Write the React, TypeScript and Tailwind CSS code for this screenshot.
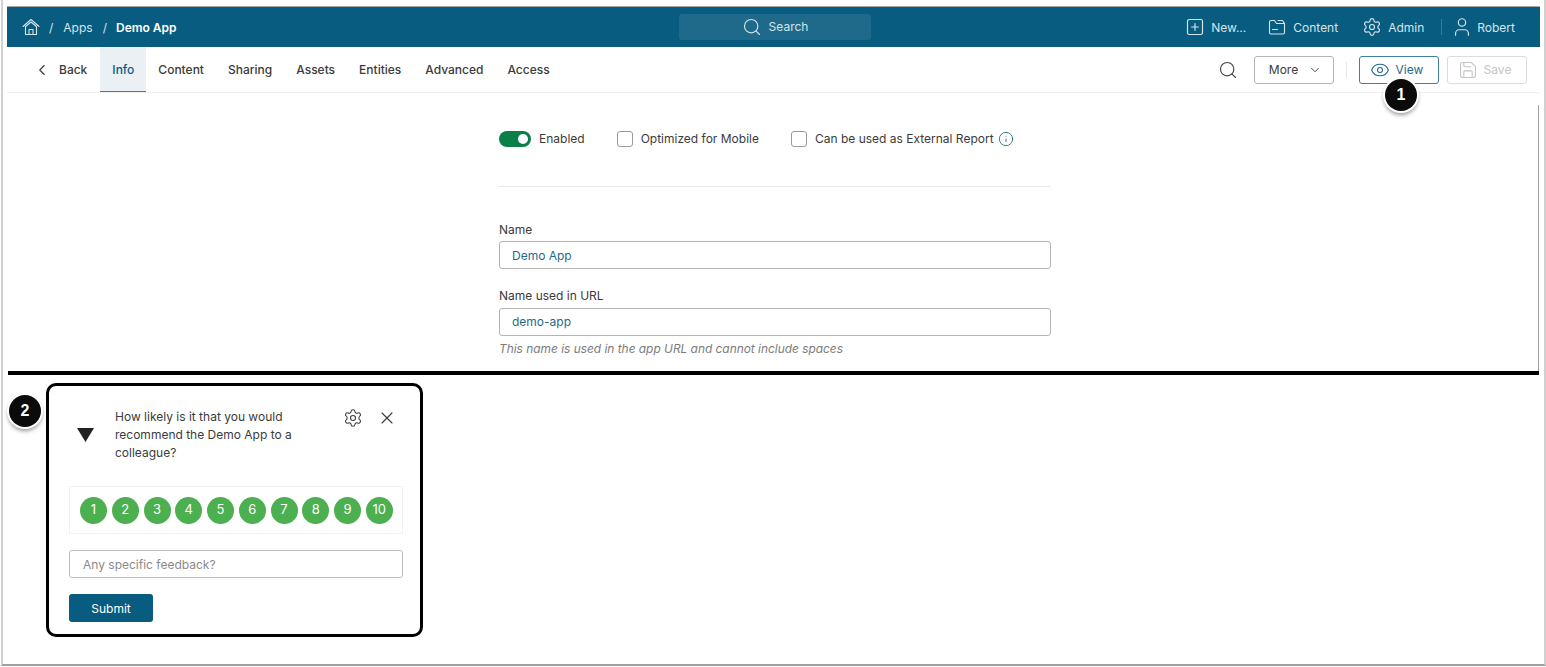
import React from 'react';
import { ChevronDown, ChevronLeft, Eye, Info, Save, Search, Settings, SquarePlus, User, X } from 'lucide-react';

const tabs = ['Info', 'Content', 'Sharing', 'Assets', 'Entities', 'Advanced', 'Access'];
const scores = [1, 2, 3, 4, 5, 6, 7, 8, 9, 10];

const HomeIcon: React.FC = () => (
  <svg width="18" height="18" viewBox="0 0 18 18" fill="none" stroke="currentColor" strokeWidth="1.1" strokeLinecap="round" strokeLinejoin="round">
    <path d="M1 8.5 9 1.5l8 7" />
    <path d="M3.5 8.5 9 4l5.5 4.5" />
    <path d="M3.5 8.5v8h11v-8" />
    <path d="M7 16.5v-5h4v5" />
  </svg>
);

const FolderIcon: React.FC = () => (
  <svg width="18" height="18" viewBox="0 0 18 18" fill="none" stroke="currentColor" strokeWidth="1.1" strokeLinecap="round" strokeLinejoin="round">
    <path d="M1.5 4.5V14.5a1.5 1.5 0 0 0 1.5 1.5h12a1.5 1.5 0 0 0 1.5-1.5V5.5H8.5L6.5 2.5H3A1.5 1.5 0 0 0 1.5 4V4.5" />
    <path d="M10 2.5h4.5l2 3" />
    <path d="M4.5 11.5h5" />
  </svg>
);

const Badge: React.FC<{ n: number; className: string }> = ({ n, className }) => (
  <div className={`absolute z-10 flex h-[32px] w-[32px] items-center justify-center rounded-full bg-[#0b0b0b] font-['Liberation_Sans',sans-serif] text-[16px] font-bold text-white shadow-[0_3px_4px_1px_rgba(0,0,0,0.4)] ring-2 ring-white ${className}`}>
    {n}
  </div>
);

const HeaderLink: React.FC<{ icon: React.ReactNode; text: string; gap: string; className?: string }> = ({ icon, text, gap, className }) => (
  <div className={`flex items-center ${gap} ${className || ''}`}>
    {icon}
    <span className="pt-[1px]">{text}</span>
  </div>
);

export default function App() {
  return (
    <div className="h-[667px] w-[1546px] overflow-hidden bg-white pl-[1px] pb-[1px] font-['Inter',sans-serif] text-[12px] text-[#3b3b3b]">
      <div className="relative flex h-full flex-col border-r-2 border-b-2 border-l-2 border-r-[#d0d0d0] border-b-[#a0a0a0] border-l-[#d0d0d0] pt-[6px] pr-[4px] pl-[4px]">
        <div className="h-px shrink-0 bg-[#a8a8a8]" />
        <header className="flex h-[40px] shrink-0 items-center bg-[#085c80] pl-[15px] pr-[25px] text-[#d5e4ea]">
          <div className="flex w-[657px] items-center">
            <HomeIcon />
            <span className="ml-[9px] pt-[1px]">/</span>
            <span className="ml-[10px] pt-[1px]">Apps</span>
            <span className="ml-[10px] pt-[1px]">/</span>
            <span className="ml-[9px] pt-[1px] font-semibold text-white">Demo App</span>
          </div>
          <div className="flex h-[26px] w-[192px] items-center justify-center gap-[7px] rounded-[3px] bg-[#1f6a8a]">
            <Search size={20} strokeWidth={1.4} />
            <span>Search</span>
          </div>
          <div className="ml-auto flex items-center">
            <HeaderLink icon={<SquarePlus size={20} strokeWidth={1.4} />} text="New..." gap="gap-[6px]" />
            <HeaderLink icon={<FolderIcon />} text="Content" gap="gap-[7px]" className="ml-[22px]" />
            <HeaderLink icon={<Settings size={20} strokeWidth={1.4} />} text="Admin" gap="gap-[6px]" className="ml-[24px]" />
            <div className="ml-[17px] h-[16px] w-px bg-[#3a7c98]" />
            <HeaderLink icon={<User size={22} strokeWidth={1.3} />} text="Robert" gap="gap-[4px]" className="ml-[9px]" />
          </div>
        </header>

        <nav className="flex h-[46px] shrink-0 items-center border-b border-[#f0f0f0] pr-[13px]">
          <div className="ml-[26px] flex items-center gap-[8px] pt-[1px]">
            <ChevronLeft size={18} strokeWidth={1.5} />
            <span className="font-medium">Back</span>
          </div>
          <div className="ml-[13px] flex h-full">
            {tabs.map((tab) =>
              tab === 'Info' ? (
                <div key={tab} className="flex w-[46px] items-center justify-center border-b border-[#3f7f9c] bg-[#eaf0f4] pt-[1px] font-medium text-[#085c80]">
                  {tab}
                </div>
              ) : (
                <div key={tab} className="flex items-center px-[12px] pt-[1px] font-medium">
                  {tab}
                </div>
              ),
            )}
          </div>
          <div className="ml-auto flex items-center">
            <Search size={20} strokeWidth={1.4} className="text-[#444]" />
            <button className="ml-[16px] flex h-[28px] w-[80px] items-center justify-center gap-[10px] rounded-[3px] border border-[#b4b4b4] pt-[1px] pl-[3px]">
              More
              <ChevronDown size={14} strokeWidth={1.5} />
            </button>
            <div className="ml-[12px] h-[16px] w-px bg-[#e6e6e6]" />
            <button className="ml-[12px] flex h-[28px] w-[80px] items-center justify-center gap-[6px] rounded-[3px] border border-[#3f7f9c] pt-[1px] pr-[5px] text-[#1f6a8a]">
              <Eye size={20} strokeWidth={1.3} />
              View
            </button>
            <button className="ml-[8px] flex h-[28px] w-[80px] items-center justify-center gap-[6px] rounded-[3px] border border-[#dcdcdc] pt-[1px] pr-[5px] text-[#c4c4c4]">
              <Save size={20} strokeWidth={1.3} />
              Save
            </button>
          </div>
        </nav>

        <main className="flex h-[278px] shrink-0">
          <div className="flex-1 pl-[492px] pt-[12px]">
            <div className="w-[552px]">
              <div className="mt-[22px] flex h-[24px] items-center">
                <div className="flex h-[16px] w-[32px] items-center justify-end rounded-full bg-[#0b7f4a] pr-[3px]">
                  <div className="h-[10px] w-[10px] rounded-full bg-white" />
                </div>
                <span className="ml-[8px]">Enabled</span>
                <div className="ml-[32px] h-[16px] w-[16px] rounded-[3px] border border-[#9a9a9a]" />
                <span className="ml-[8px]">Optimized for Mobile</span>
                <div className="ml-[32px] h-[16px] w-[16px] rounded-[3px] border border-[#9a9a9a]" />
                <span className="ml-[8px]">Can be used as External Report</span>
                <Info size={16} strokeWidth={1.3} className="ml-[4px] text-[#1f6a8a]" />
              </div>
              <div className="mt-[35px] h-px bg-[#e8e8e8]" />
              <div className="mt-[35px] leading-[16px]">Name</div>
              <div className="mt-[3px] flex h-[28px] items-center rounded-[3px] border border-[#b4b4b4] px-[12px] pt-[1px] text-[#1f6a8a]">Demo App</div>
              <div className="mt-[19px] leading-[16px]">Name used in URL</div>
              <div className="mt-[4px] flex h-[28px] items-center rounded-[3px] border border-[#b4b4b4] px-[12px] text-[#1f6a8a]">demo-app</div>
              <div className="mt-[5px] text-[11.9px] italic leading-[16px] text-[#7c7c7c]">This name is used in the app URL and cannot include spaces</div>
            </div>
          </div>
          <div className="mt-[12px] mr-[1px] w-px bg-[#a0a0a0]" />
        </main>

        <div className="ml-[1px] mr-[1px] h-[4px] shrink-0 bg-black" />

        <section className="pl-[39px] pt-[8px]">
          <div className="h-[254px] w-[377px] rounded-[10px] border-[3px] border-black px-[20px] pt-[22px]">
            <div className="flex">
              <div className="flex w-[46px] items-center">
                <svg width="18" height="14" viewBox="0 0 18 14" className="ml-[8px]">
                  <polygon points="0,0 17,0 8.5,14" fill="#222" />
                </svg>
              </div>
              <p className="w-[200px] leading-[18px]">How likely is it that you would recommend the Demo App to a colleague?</p>
              <div className="ml-[28px] flex h-[20px] items-center gap-[14px]">
                <Settings size={20} strokeWidth={1.3} />
                <X size={20} strokeWidth={1.3} />
              </div>
            </div>
            <div className="mt-[24px] flex h-[48px] w-[334px] items-center gap-[4.75px] border border-[#f2f2f2] pl-[10px]">
              {scores.map((s) => (
                <div key={s} className="flex h-[27px] w-[27px] shrink-0 items-center justify-center rounded-full bg-[#4caf50] text-[13px] text-white">
                  {s}
                </div>
              ))}
            </div>
            <div className="mt-[16px] flex h-[28px] w-[334px] items-center rounded-[3px] border border-[#bdbdbd] px-[13px] pt-[1px] text-[#8a8a8a]">Any specific feedback?</div>
            <button className="mt-[16px] flex h-[28px] w-[84px] items-center justify-center rounded-[3px] bg-[#085c80] pt-[1px] text-white">Submit</button>
          </div>
        </section>

        <Badge n={1} className="left-[1382px] top-[79px]" />
        <Badge n={2} className="left-[6px] top-[395px]" />
      </div>
    </div>
  );
}
